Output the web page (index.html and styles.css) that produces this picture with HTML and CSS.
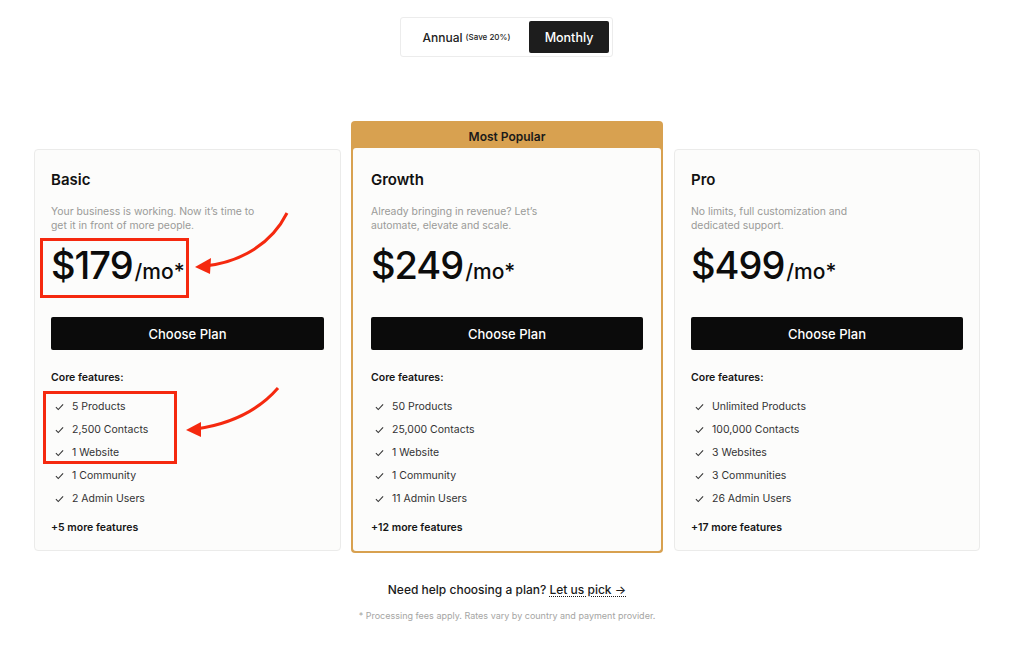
FILE: index.html
```html
<!DOCTYPE html>
<html>
<head>
    <meta charset="UTF-8">
    <title>Pricing</title>
    <link rel="stylesheet" href="styles.css">
</head>
<body>
    <div class="toggle-wrap">
        <div class="toggle">
            <div class="toggle-option">Annual <span class="save">(Save 20%)</span></div>
            <div class="toggle-option active">Monthly</div>
        </div>
    </div>

    <div class="plans">
        <div class="plan">
            <div class="card">
                <div class="plan-name">Basic</div>
                <p class="plan-desc">Your business is working. Now it’s time to<br>get it in front of more people.</p>
                <div class="price">$179<span class="per">/mo*</span></div>
                <button class="choose">Choose Plan</button>
                <div class="core">Core features:</div>
                <ul class="features">
                    <li><svg class="check" viewBox="0 0 10 8"><polyline points="1,4.2 3.6,6.8 9,1"/></svg>5 Products</li>
                    <li><svg class="check" viewBox="0 0 10 8"><polyline points="1,4.2 3.6,6.8 9,1"/></svg>2,500 Contacts</li>
                    <li><svg class="check" viewBox="0 0 10 8"><polyline points="1,4.2 3.6,6.8 9,1"/></svg>1 Website</li>
                    <li><svg class="check" viewBox="0 0 10 8"><polyline points="1,4.2 3.6,6.8 9,1"/></svg>1 Community</li>
                    <li><svg class="check" viewBox="0 0 10 8"><polyline points="1,4.2 3.6,6.8 9,1"/></svg>2 Admin Users</li>
                </ul>
                <div class="more">+5 more features</div>
            </div>
        </div>

        <div class="plan popular">
            <div class="popular-label">Most Popular</div>
            <div class="card">
                <div class="plan-name">Growth</div>
                <p class="plan-desc">Already bringing in revenue? Let’s<br>automate, elevate and scale.</p>
                <div class="price">$249<span class="per">/mo*</span></div>
                <button class="choose">Choose Plan</button>
                <div class="core">Core features:</div>
                <ul class="features">
                    <li><svg class="check" viewBox="0 0 10 8"><polyline points="1,4.2 3.6,6.8 9,1"/></svg>50 Products</li>
                    <li><svg class="check" viewBox="0 0 10 8"><polyline points="1,4.2 3.6,6.8 9,1"/></svg>25,000 Contacts</li>
                    <li><svg class="check" viewBox="0 0 10 8"><polyline points="1,4.2 3.6,6.8 9,1"/></svg>1 Website</li>
                    <li><svg class="check" viewBox="0 0 10 8"><polyline points="1,4.2 3.6,6.8 9,1"/></svg>1 Community</li>
                    <li><svg class="check" viewBox="0 0 10 8"><polyline points="1,4.2 3.6,6.8 9,1"/></svg>11 Admin Users</li>
                </ul>
                <div class="more">+12 more features</div>
            </div>
        </div>

        <div class="plan">
            <div class="card">
                <div class="plan-name">Pro</div>
                <p class="plan-desc">No limits, full customization and<br>dedicated support.</p>
                <div class="price">$499<span class="per">/mo*</span></div>
                <button class="choose">Choose Plan</button>
                <div class="core">Core features:</div>
                <ul class="features">
                    <li><svg class="check" viewBox="0 0 10 8"><polyline points="1,4.2 3.6,6.8 9,1"/></svg>Unlimited Products</li>
                    <li><svg class="check" viewBox="0 0 10 8"><polyline points="1,4.2 3.6,6.8 9,1"/></svg>100,000 Contacts</li>
                    <li><svg class="check" viewBox="0 0 10 8"><polyline points="1,4.2 3.6,6.8 9,1"/></svg>3 Websites</li>
                    <li><svg class="check" viewBox="0 0 10 8"><polyline points="1,4.2 3.6,6.8 9,1"/></svg>3 Communities</li>
                    <li><svg class="check" viewBox="0 0 10 8"><polyline points="1,4.2 3.6,6.8 9,1"/></svg>26 Admin Users</li>
                </ul>
                <div class="more">+17 more features</div>
            </div>
        </div>
    </div>

    <div class="help">Need help choosing a plan? <a class="pick" href="#">Let us pick →</a></div>
    <div class="fees">* Processing fees apply. Rates vary by country and payment provider.</div>

    <!-- red annotation marks drawn over the screenshot -->
    <svg class="marks" width="1024" height="655" viewBox="0 0 1024 655">
        <rect x="41.5" y="239.5" width="146" height="57"/>
        <rect x="44.5" y="392.5" width="131" height="70"/>
        <path d="M287 213 C 272 243, 242 262, 205 266"/>
        <polygon points="195,267 211,258 210,274"/>
        <path d="M278 388 C 258 411, 230 424, 196 429"/>
        <polygon points="186,430 201,422 201,437"/>
    </svg>
</body>
</html>
```

FILE: styles.css
```css
body {
    margin: 0;
    background-color: #fff;
    font-family: Inter, "Noto Sans", sans-serif;
    color: #151515;
    position: relative;
}
.toggle-wrap {
    display: flex;
    justify-content: center;
    padding-top: 17px;
    padding-right: 11px;
}
.toggle {
    display: flex;
    width: 213px;
    height: 40px;
    box-sizing: border-box;
    padding: 3px;
    border: 1px solid #ececec;
    border-radius: 3px;
    background: #fff;
}
.toggle-option {
    flex: 1;
    display: flex;
    align-items: center;
    justify-content: center;
    font-size: 12px;
    font-weight: 500;
    color: #222;
}
.toggle-option .save {
    font-size: 8px;
    margin-left: 3px;
}
.toggle-option.active {
    flex: 0 0 80px;
    background: #1d1d1d;
    color: #fff;
    border-radius: 2px;
    font-size: 12.5px;
}
.plans {
    display: flex;
    align-items: flex-start;
    gap: 10px;
    padding: 0 34px;
    margin-top: 64px;
}
.plan {
    width: 307px;
    margin-top: 28px;
}
.plan:last-child {
    margin-left: 1px;
    width: 306px;
}
.card {
    box-sizing: border-box;
    height: 402px;
    padding: 20px 16px 17px;
    background: #fcfcfb;
    border: 1px solid #ebebea;
    border-radius: 4px;
}
.popular {
    width: 312px;
    margin-top: 0;
    background: #d8a150;
    border-radius: 4px;
    padding: 0 2px 2px;
    box-sizing: border-box;
}
.popular-label {
    height: 27px;
    line-height: 32px;
    text-align: center;
    font-size: 12px;
    font-weight: 600;
    color: #1a1a1a;
}
.popular .card {
    border: none;
    border-radius: 3px;
    height: 403px;
    padding: 22px 18px 17px;
    background: #fcfcfb;
}
.plan-name {
    font-size: 15px;
    font-weight: 600;
    line-height: 20px;
    color: #111;
}
.plan-desc {
    margin: 15px 0 0;
    font-size: 10.4px;
    line-height: 14px;
    color: #9a9a98;
}
.price {
    display: flex;
    align-items: baseline;
    height: 44px;
    margin-top: 10px;
    font-size: 38px;
    font-weight: 500;
    line-height: 44px;
    letter-spacing: -1px;
    color: #0c0c0c;
}
.price .per {
    font-size: 21px;
    line-height: 1;
    letter-spacing: 0;
    margin-left: 2px;
}
.choose {
    display: block;
    width: 100%;
    height: 33px;
    margin-top: 30px;
    border: none;
    border-radius: 2px;
    background: #0b0b0b;
    color: #fff;
    font-family: inherit;
    font-size: 13px;
    font-weight: 500;
}
.core {
    margin-top: 21px;
    font-size: 10.5px;
    font-weight: 600;
    line-height: 14px;
}
.features {
    list-style: none;
    margin: 10px 0 0;
    padding: 0 0 0 4px;
}
.features li {
    display: flex;
    align-items: center;
    height: 23px;
    font-size: 10.5px;
    color: #333;
}
.check {
    width: 9px;
    height: 8px;
    margin-right: 8px;
    fill: none;
    stroke: #333;
    stroke-width: 1.2;
}
.more {
    margin-top: 11px;
    font-size: 10.5px;
    font-weight: 600;
    line-height: 14px;
}
.help {
    margin-top: 28px;
    padding-right: 10px;
    text-align: center;
    font-size: 12px;
    font-weight: 500;
    line-height: 18px;
    color: #1a1a1a;
}
.pick {
    color: inherit;
    text-decoration: underline dotted;
    text-underline-offset: 2px;
}
.fees {
    margin-top: 11px;
    padding-right: 10px;
    text-align: center;
    font-size: 9px;
    color: #a5a5a3;
}
.marks {
    position: absolute;
    top: 0;
    left: 0;
    pointer-events: none;
}
.marks rect,
.marks path {
    fill: none;
    stroke: #f5290f;
    stroke-width: 3;
}
.marks polygon {
    fill: #f5290f;
}
```
